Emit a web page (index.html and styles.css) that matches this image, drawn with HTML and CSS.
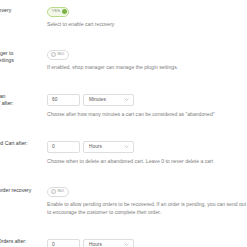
FILE: index.html
```html
<!DOCTYPE html>
<html lang="en">
<head>
<meta charset="utf-8">
<title>Settings</title>
<link rel="stylesheet" href="styles.css">
</head>
<body>
<div class="page">
  <div class="row">
    <div class="label">Enable Cart Recovery</div>
    <div class="field">
      <span class="toggle on"><span class="toggle-text">YES</span><span class="dot"></span></span>
      <p class="desc tight">Select to enable cart recovery</p>
    </div>
  </div>
  <div class="row">
    <div class="label">Allow shop manager to manage plugin settings</div>
    <div class="field">
      <span class="toggle off"><span class="ring"></span><span class="toggle-text">NO</span></span>
      <p class="desc tight">If enabled, shop manager can manage the plugin settings.</p>
    </div>
  </div>
  <div class="row">
    <div class="label">Consider cart as an "abandoned cart" after:</div>
    <div class="field">
      <div class="inputs">
        <span class="num">60</span>
        <span class="select"><span>Minutes</span><svg class="chev" width="5" height="3" viewBox="0 0 5 3"><path d="M0.5 0.5 L2.5 2.5 L4.5 0.5" fill="none" stroke="#b5b5b5" stroke-width="0.7"/></svg></span>
      </div>
      <p class="desc">Choose after how many minutes a cart can be considered as "abandoned"</p>
    </div>
  </div>
  <div class="row">
    <div class="label">Delete Abandoned Cart after:</div>
    <div class="field">
      <div class="inputs">
        <span class="num">0</span>
        <span class="select"><span>Hours</span><svg class="chev" width="5" height="3" viewBox="0 0 5 3"><path d="M0.5 0.5 L2.5 2.5 L4.5 0.5" fill="none" stroke="#b5b5b5" stroke-width="0.7"/></svg></span>
      </div>
      <p class="desc">Choose when to delete an abandoned cart. Leave 0 to never delete a cart</p>
    </div>
  </div>
  <div class="row">
    <div class="label">Enable pending order recovery</div>
    <div class="field">
      <span class="toggle off"><span class="ring"></span><span class="toggle-text">NO</span></span>
      <p class="desc tight">Enable to allow pending orders to be recovered. If an order is pending, you can send out email reminders to encourage the customer to complete their order.</p>
    </div>
  </div>
  <div class="row">
    <div class="label">Delete Pending Orders after:</div>
    <div class="field">
      <div class="inputs">
        <span class="num">0</span>
        <span class="select"><span>Hours</span><svg class="chev" width="5" height="3" viewBox="0 0 5 3"><path d="M0.5 0.5 L2.5 2.5 L4.5 0.5" fill="none" stroke="#b5b5b5" stroke-width="0.7"/></svg></span>
      </div>
      <p class="desc">Choose when to delete pending orders. Leave 0 to never delete them</p>
    </div>
  </div>
</div>
</body>
</html>
```
FILE: styles.css
```css
html, body {
  margin: 0;
  padding: 0;
  background: #ffffff;
  overflow: hidden;
}
body {
  font-family: "Liberation Sans", Arial, sans-serif;
  width: 247px;
  height: 247px;
}
.page {
  margin-left: -39.5px;
  padding-top: 6.5px;
}
.row {
  display: grid;
  grid-template-columns: 86.5px 240px;
  margin-bottom: 21.5px;
}
.label {
  font-size: 5.2px;
  line-height: 7.5px;
  color: #3a3e42;
  padding-right: 14.5px;
}
.field {
  min-width: 0;
  font-size: 5.1px;
}
.toggle {
  display: flex;
  align-items: center;
  box-sizing: border-box;
  width: 22px;
  height: 10px;
  border-radius: 5px;
  border: 1px solid #dcdcdc;
  background: #ffffff;
}
.toggle.on {
  border-color: #b8d98a;
  background: #f3f9e8;
  justify-content: space-between;
  padding: 0 1.5px 0 3.5px;
}
.toggle.off {
  gap: 2px;
  padding: 0 3px;
}
.toggle-text {
  font-size: 4.4px;
  line-height: 1;
  color: #8c8c8c;
}
.dot {
  width: 5px;
  height: 5px;
  border-radius: 50%;
  background: #7cb342;
}
.ring {
  width: 2.5px;
  height: 2.5px;
  border-radius: 50%;
  border: 0.6px solid #c4c4c4;
  background: #f2f2f2;
}
.inputs {
  display: flex;
  gap: 3px;
  margin-top: 1px;
}
.num, .select {
  box-sizing: border-box;
  height: 12px;
  border: 0.7px solid #dedede;
  border-radius: 2px;
  background: #ffffff;
  display: flex;
  align-items: center;
  font-size: 4.8px;
  color: #555555;
}
.num {
  width: 33px;
  padding-left: 4px;
}
.select {
  width: 51px;
  padding: 0 4.5px 0 5px;
  justify-content: space-between;
}
.chev {
  display: block;
}
.desc {
  margin: 4.5px 0 0;
  font-size: 5.1px;
  line-height: 8px;
  color: #7d7d7d;
}
.desc.tight {
  margin-top: 3.5px;
}
```
